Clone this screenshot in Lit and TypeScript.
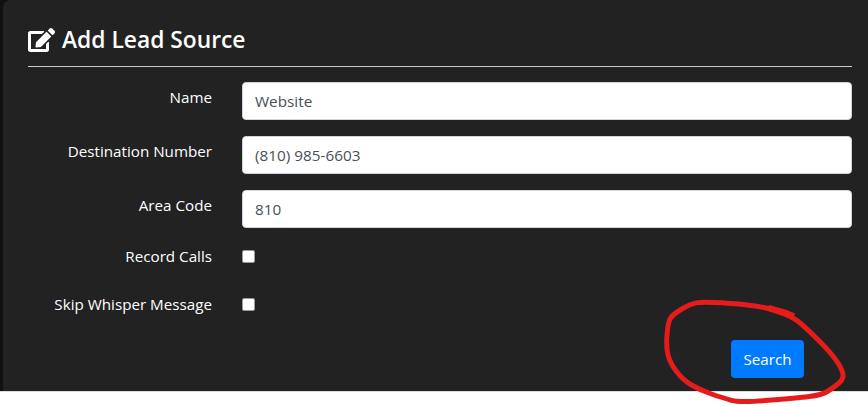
import { LitElement, html, css, svg } from "lit";
import { customElement } from "lit/decorators.js";

const ring: [number, number][] = [
  [668, 323], [672, 315], [690, 304], [703, 301.7], [740, 304], [770, 308], [793, 316.7], [810, 331.7],
  [830, 351.7], [841.7, 368], [844, 379], [833, 388], [821.7, 395], [796.7, 398], [740, 402.7],
  [723, 398], [700, 390], [683, 380], [670, 363], [666, 346.7],
];

function smooth(points: [number, number][]): string {
  const mid = (a: [number, number], b: [number, number]) => [(a[0] + b[0]) / 2, (a[1] + b[1]) / 2];
  const n = points.length;
  const start = mid(points[n - 1], points[0]);
  let d = `M${start[0]} ${start[1]}`;
  points.forEach((p, i) => {
    const m = mid(p, points[(i + 1) % n]);
    d += `Q${p[0]} ${p[1]} ${m[0]} ${m[1]}`;
  });
  return d + "Z";
}

@customElement("app-root")
export class AppRoot extends LitElement {
  static styles = css`
    :host { display: block; width: 868px; height: 407px; background: #fff; position: relative; overflow: hidden; font-family: "Open Sans", "Noto Sans", sans-serif; }
    .back { background: #111; height: 392px; padding-left: 3px; box-sizing: border-box; border-bottom: 1px solid #ddd; }
    .panel { background: #222; height: 100%; border-top-left-radius: 8px; padding: 23px 16px 0 25px; box-sizing: border-box; color: #fff; }
    .title { display: flex; align-items: center; gap: 6px; height: 33px; padding-bottom: 10px; border-bottom: 1px solid #ccc; }
    .title svg { width: 27px; height: 24px; display: block; flex: none; margin-right: 1px; }
    h2 { margin: 0; font-size: 22.8px; font-weight: 600; line-height: 33px; }
    .rows { display: flex; flex-direction: column; }
    .row { display: grid; grid-template-columns: 184px 1fr; column-gap: 30px; }
    .row.field { margin-top: 16px; height: 38px; }
    .row.field:first-child { margin-top: 15px; }
    .row label { text-align: right; font-size: 15.2px; line-height: 22px; }
    .row.field label { padding-top: 4px; }
    .box { height: 38px; box-sizing: border-box; background: #fff; border: 1px solid #ced4da; border-radius: 4px; color: #495057; font-size: 15.3px; line-height: 36px; padding: 0 12px; }
    .row.check { align-items: center; height: 22px; margin-top: 17px; }
    .row.check + .row.check { margin-top: 26px; }
    .check i { display: block; width: 13px; height: 13px; box-sizing: border-box; background: #fff; border: 1px solid #999; border-radius: 2px; }
    .actions { display: flex; justify-content: flex-end; margin-top: 25px; padding-right: 48px; }
    button { width: 73px; height: 38px; background: #007bff; color: #fff; border: 0; border-radius: 4px; font: inherit; font-size: 15.2px; padding: 0; }
    .scribble { position: absolute; left: 0; top: 0; width: 868px; height: 407px; pointer-events: none; }
  `;
  render() {
    return html`
      <div class="back"><div class="panel">
        <div class="title">
          <svg viewBox="0 0 576 512"><path fill="#fff" d="M402.6 83.2l90.2 90.2c3.800 3.800 3.800 10 0 13.800L274.400 405.600l-92.800 10.300c-12.400 1.400-22.900-9.100-21.500-21.500l10.300-92.800L388.800 83.200c3.800-3.800 10-3.800 13.800 0zm162-22.900l-48.800-48.800c-15.200-15.200-39.900-15.200-55.200 0l-35.400 35.400c-3.800 3.800-3.800 10 0 13.800l90.200 90.200c3.800 3.800 10 3.800 13.800 0l35.400-35.400c15.200-15.300 15.200-40 0-55.200zM384 346.200V448H64V128h229.800c3.200 0 6.200-1.300 8.500-3.500l40-40c7.600-7.600 2.200-20.500-8.500-20.500H48C21.500 64 0 85.500 0 112v352c0 26.500 21.500 48 48 48h352c26.500 0 48-21.500 48-48V306.200c0-10.700-12.900-16-20.500-8.500l-40 40c-2.200 2.300-3.500 5.300-3.500 8.500z"/></svg>
          <h2>Add Lead Source</h2>
        </div>
        <div class="rows">
          <div class="row field"><label>Name</label><div class="box">Website</div></div>
          <div class="row field"><label>Destination Number</label><div class="box">(810) 985-6603</div></div>
          <div class="row field"><label>Area Code</label><div class="box">810</div></div>
          <div class="row check"><label>Record Calls</label><i></i></div>
          <div class="row check"><label>Skip Whisper Message</label><i></i></div>
        </div>
        <div class="actions"><button>Search</button></div>
      </div></div>
      <svg class="scribble" viewBox="0 0 868 407">
        ${svg`<path fill="none" stroke="#e61c1c" stroke-width="5" stroke-linejoin="round" d=${smooth(ring)}/>`}
        <polygon fill="#e61c1c" points="769,305 787,310 795,313.500 793,319.500 768,311"/>
      </svg>
    `;
  }
}
